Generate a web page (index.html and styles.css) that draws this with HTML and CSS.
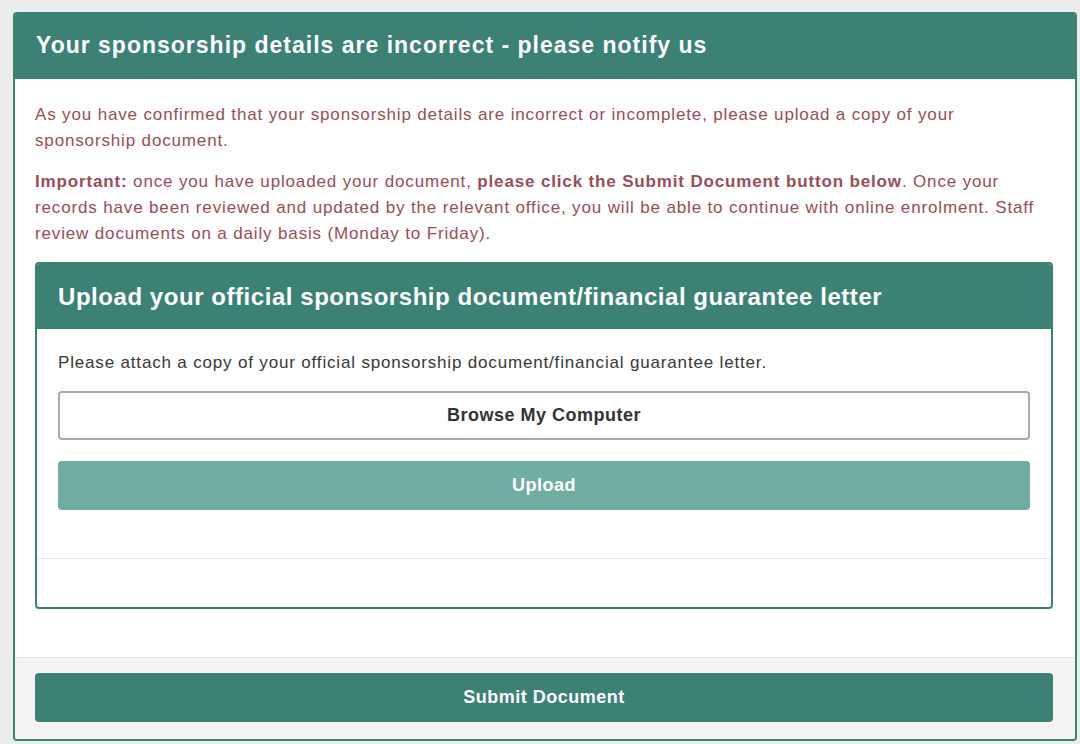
FILE: index.html
```html
<!DOCTYPE html>
<html lang="en">
<head>
<meta charset="utf-8">
<title>Sponsorship details</title>
<link rel="stylesheet" href="styles.css">
</head>
<body>
<div class="panel">
  <div class="panel-head">
    <h1 class="panel-title">Your sponsorship details are incorrect - please notify us</h1>
  </div>
  <div class="panel-body">
    <p class="msg">As you have confirmed that your sponsorship details are incorrect or incomplete, please upload a copy of your sponsorship document.</p>
    <p class="msg"><strong>Important:</strong> once you have uploaded your document, <strong>please click the Submit Document button below</strong>. Once your records have been reviewed and updated by the relevant office, you will be able to continue with online enrolment. Staff review documents on a daily basis (Monday to Friday).</p>
    <div class="card">
      <div class="card-head">
        <h2 class="card-title">Upload your official sponsorship document/financial guarantee letter</h2>
      </div>
      <div class="card-body">
        <p class="hint">Please attach a copy of your official sponsorship document/financial guarantee letter.</p>
        <button class="btn btn-browse" type="button">Browse My Computer</button>
        <button class="btn btn-upload" type="button">Upload</button>
      </div>
      <div class="card-foot"></div>
    </div>
  </div>
  <div class="panel-foot">
    <button class="btn btn-submit" type="button">Submit Document</button>
  </div>
</div>
</body>
</html>
```

FILE: styles.css
```css
html, body {
  margin: 0;
  padding: 0;
}
body {
  background: #ececec;
  font-family: "Liberation Sans", Arial, sans-serif;
  padding: 12px 3px 3px 13px;
}
.panel {
  border: 2px solid #3b8174;
  border-radius: 4px;
  background: #fff;
  overflow: hidden;
}
.panel-head {
  background: #3b8174;
  height: 65px;
  display: flex;
  align-items: center;
  padding: 0 21px;
}
.panel-title {
  margin: 0;
  color: #fff;
  font-size: 23px;
  letter-spacing: 1px;
  font-weight: bold;
  position: relative;
  top: -1px;
}
.panel-body {
  padding: 23px 22px 48px 20px;
}
.msg {
  margin: 0 0 15px;
  color: #9a4d54;
  font-size: 17px;
  letter-spacing: 0.85px;
  line-height: 26px;
}
.msg strong {
  font-weight: bold;
}
.card {
  border: 2px solid #3b8174;
  border-radius: 4px;
  overflow: hidden;
}
.card-head {
  background: #3b8174;
  height: 65px;
  display: flex;
  align-items: center;
  padding: 0 21px;
}
.card-title {
  margin: 0;
  color: #fff;
  font-size: 24px;
  letter-spacing: 0.55px;
  font-weight: bold;
}
.card-body {
  padding: 21px 21px 48px 21px;
  display: flex;
  flex-direction: column;
}
.hint {
  margin: 0 0 15px;
  color: #383838;
  font-size: 17px;
  letter-spacing: 0.83px;
  line-height: 26px;
}
.btn {
  font-family: "Liberation Sans", Arial, sans-serif;
  font-size: 18px;
  letter-spacing: 0.5px;
  font-weight: bold;
  height: 49px;
  border-radius: 4px;
  cursor: pointer;
  width: 100%;
}
.btn-browse {
  background: #fff;
  color: #333;
  border: 2px solid #ababab;
}
.btn-upload {
  margin-top: 21px;
  background: #6fada3;
  color: #fff;
  border: none;
}
.card-foot {
  border-top: 1px solid #e6e6e6;
  height: 48px;
}
.panel-foot {
  background: #f3f3f3;
  border-top: 1px solid #e2e2e2;
  padding: 15px 22px 17px 20px;
}
.btn-submit {
  background: #3b8174;
  color: #fff;
  border: none;
  display: block;
}
```
